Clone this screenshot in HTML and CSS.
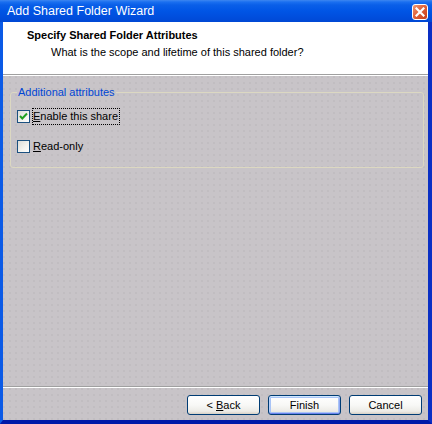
FILE: index.html
```html
<!DOCTYPE html>
<html lang="en">
<head>
    <meta charset="UTF-8">
    <title>Add Shared Folder Wizard</title>
    <link rel="stylesheet" href="styles.css">
</head>
<body>
    <div class="window">
        <div class="titlebar">
            <span class="title">Add Shared Folder Wizard</span>
            <span class="close">
                <svg width="10" height="10" viewBox="0 0 10 10">
                    <path d="M1.5 1.5 L8.5 8.5 M8.5 1.5 L1.5 8.5" stroke="#fff" stroke-width="2.2" stroke-linecap="square"/>
                </svg>
            </span>
        </div>
        <div class="frame">
            <div class="header">
                <div class="heading">Specify Shared Folder Attributes</div>
                <div class="subheading">What is the scope and lifetime of this shared folder?</div>
            </div>
            <div class="content">
                <fieldset class="group">
                    <legend>Additional attributes</legend>
                    <label class="check">
                        <span class="box">
                            <svg width="11" height="11" viewBox="0 0 11 11">
                                <path d="M2 5 L4.3 7.5 L9 2.5" fill="none" stroke="#21a121" stroke-width="2"/>
                            </svg>
                        </span>
                        <span class="text focused"><u>E</u>nable this share</span>
                    </label>
                    <label class="check">
                        <span class="box"></span>
                        <span class="text"><u>R</u>ead-only</span>
                    </label>
                </fieldset>
            </div>
            <div class="footer">
                <button>&lt; <u>B</u>ack</button>
                <button class="default">Finish</button>
                <button>Cancel</button>
            </div>
        </div>
    </div>
</body>
</html>
```

FILE: styles.css
```css
body {
    margin: 0;
    padding: 0;
    font-family: "Liberation Sans", Arial, sans-serif;
    font-size: 11px;
    color: #000;
}
.window {
    width: 432px;
    height: 424px;
    display: flex;
    flex-direction: column;
}
.titlebar {
    height: 22px;
    display: flex;
    align-items: center;
    justify-content: space-between;
    padding: 0 4px 0 7px;
    background: linear-gradient(#3d86f0 0, #1a6ff0 2px, #0a5fe8 5px, #0055e5 50%, #004ddc 80%, #0048d4 100%);
}
.titlebar .title {
    color: #fff;
    font-size: 12.5px;
    line-height: 15px;
}
.titlebar .close {
    width: 14px;
    height: 14px;
    margin-top: 1px;
    border: 1px solid #fff;
    border-radius: 3px;
    display: flex;
    align-items: center;
    justify-content: center;
    background: linear-gradient(135deg, #f09a78 0%, #e0623a 45%, #c63d18 100%);
}
.frame {
    flex: 1;
    display: flex;
    flex-direction: column;
    border-left: 3px solid #0b5ae6;
    border-right: 4px solid #0a2fc4;
    border-bottom: 4px solid #0019a8;
    background-color: #c8c4c8;
    background-image: radial-gradient(circle at 1px 1px, #c1bdc1 0.7px, transparent 0.9px);
    background-size: 6px 6px;
}
.header {
    height: 53px;
    background: #fff;
    padding: 7px 0 0 24px;
    box-sizing: border-box;
    border-bottom: 1px solid #a0a0a0;
    box-shadow: 0 1px 0 #fff;
}
.header .heading {
    font-weight: bold;
    line-height: 13px;
}
.header .subheading {
    margin: 4px 0 0 24px;
    line-height: 13px;
}
.content {
    flex: 1;
    padding: 11px 4px 0 7px;
}
.group {
    margin: 0;
    padding: 9px 6px 12px 6px;
    border: 1px solid #dcd8c2;
    border-radius: 3px;
    display: flex;
    flex-direction: column;
    gap: 13px;
}
.group legend {
    color: #0046d5;
    padding: 0 1px;
    line-height: 13px;
}
.check {
    display: flex;
    align-items: center;
    height: 17px;
}
.check .box {
    width: 11px;
    height: 11px;
    border: 1px solid #1c5180;
    background: linear-gradient(135deg, #dcdcd7 0%, #f4f4f0 60%, #fff 100%);
    display: flex;
}
.check .text {
    margin-left: 2px;
    line-height: 15px;
    padding: 0 1px 0 0;
    border: 1px solid transparent;
}
.check .text.focused {
    border: 1px dotted #000;
}
.footer {
    border-top: 1px solid #a0a0a0;
    box-shadow: inset 0 1px 0 #fff;
    padding: 8px 6px 5px 0;
    display: flex;
    justify-content: flex-end;
    gap: 8px;
}
.footer button {
    width: 73px;
    height: 20px;
    padding: 0;
    font-family: inherit;
    font-size: 11px;
    color: #000;
    border: 1px solid #003c74;
    border-radius: 3px;
    background: linear-gradient(#ffffff 0%, #f8f8f6 50%, #ecebe6 85%, #d6d0c5 100%);
}
.footer button.default {
    box-shadow: inset 0 1px 0 #cee7ff, inset 0 -1px 0 #6982ee, inset 1px 0 0 #b7d0fa, inset -1px 0 0 #90a8f2, inset 0 0 0 2px #a9c4f6;
}
```
